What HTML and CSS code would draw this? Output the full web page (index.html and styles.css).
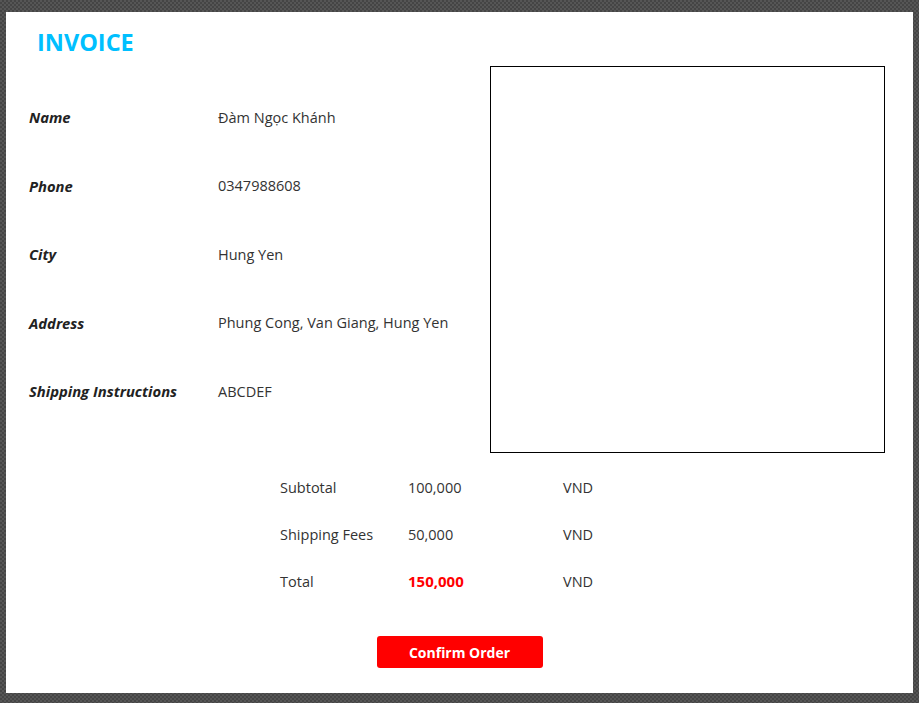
FILE: index.html
```html
<!DOCTYPE html>
<html lang="vi">
<head>
<meta charset="utf-8">
<title>Invoice</title>
<link rel="stylesheet" href="styles.css">
</head>
<body>
<div class="panel">
  <div class="top">
    <div class="left">
      <h1 class="title">INVOICE</h1>
      <div class="info">
        <div class="row"><span class="label">Name</span><span class="value">Đàm Ngọc Khánh</span></div>
        <div class="row"><span class="label">Phone</span><span class="value">0347988608</span></div>
        <div class="row"><span class="label">City</span><span class="value">Hung Yen</span></div>
        <div class="row"><span class="label">Address</span><span class="value">Phung Cong, Van Giang, Hung Yen</span></div>
        <div class="row"><span class="label">Shipping Instructions</span><span class="value">ABCDEF</span></div>
      </div>
    </div>
    <div class="box"></div>
  </div>
  <div class="summary">
    <div class="srow"><span>Subtotal</span><span>100,000</span><span>VND</span></div>
    <div class="srow"><span>Shipping Fees</span><span>50,000</span><span>VND</span></div>
    <div class="srow"><span>Total</span><span class="total">150,000</span><span>VND</span></div>
  </div>
  <div class="actions">
    <button class="confirm" type="button">Confirm Order</button>
  </div>
</div>
</body>
</html>
```

FILE: styles.css
```css
* { box-sizing: border-box; }
html, body { margin: 0; padding: 0; }
body {
  height: 703px;
  padding-top: 12px;
  background-color: #4d4d4d;
  background-image: repeating-conic-gradient(#454545 0 25%, #565656 0 50%);
  background-size: 4px 4px;
  font-family: "Open Sans", "Noto Sans", sans-serif;
  font-size: 14.5px;
  color: #333;
}
.panel {
  margin: 0 6px;
  width: 907px;
  height: 681px;
  background: #fff;
}
.top {
  display: flex;
  align-items: flex-start;
}
.left {
  width: 461px;
  margin-left: 23px;
  padding-top: 14px;
}
.title {
  margin: 0 0 25px 8px;
  font-size: 23.5px;
  line-height: 32px;
  font-weight: 700;
  color: #00bfff;
}
.row {
  display: flex;
  align-items: center;
  height: 68.5px;
}
.label {
  width: 189px;
  font-size: 14.8px;
  font-weight: 700;
  font-style: italic;
  color: #222;
}
.value { color: #333; }
.box {
  margin-top: 54px;
  width: 395px;
  height: 387px;
  border: 1px solid #000;
}
.summary {
  margin: 11px 0 0 274px;
}
.srow {
  display: grid;
  grid-template-columns: 128px 155px auto;
  align-items: center;
  height: 47px;
}
.total {
  color: #ff0000;
  font-weight: 700;
  font-size: 15px;
  line-height: 1;
}
.actions {
  display: flex;
  justify-content: center;
  margin-top: 31px;
}
.confirm {
  width: 166px;
  height: 32px;
  border: 0;
  border-radius: 3px;
  background: #ff0000;
  color: #fff;
  font-family: "Open Sans", "Noto Sans", sans-serif;
  font-size: 14px;
  font-weight: 700;
  padding: 0;
}
```
